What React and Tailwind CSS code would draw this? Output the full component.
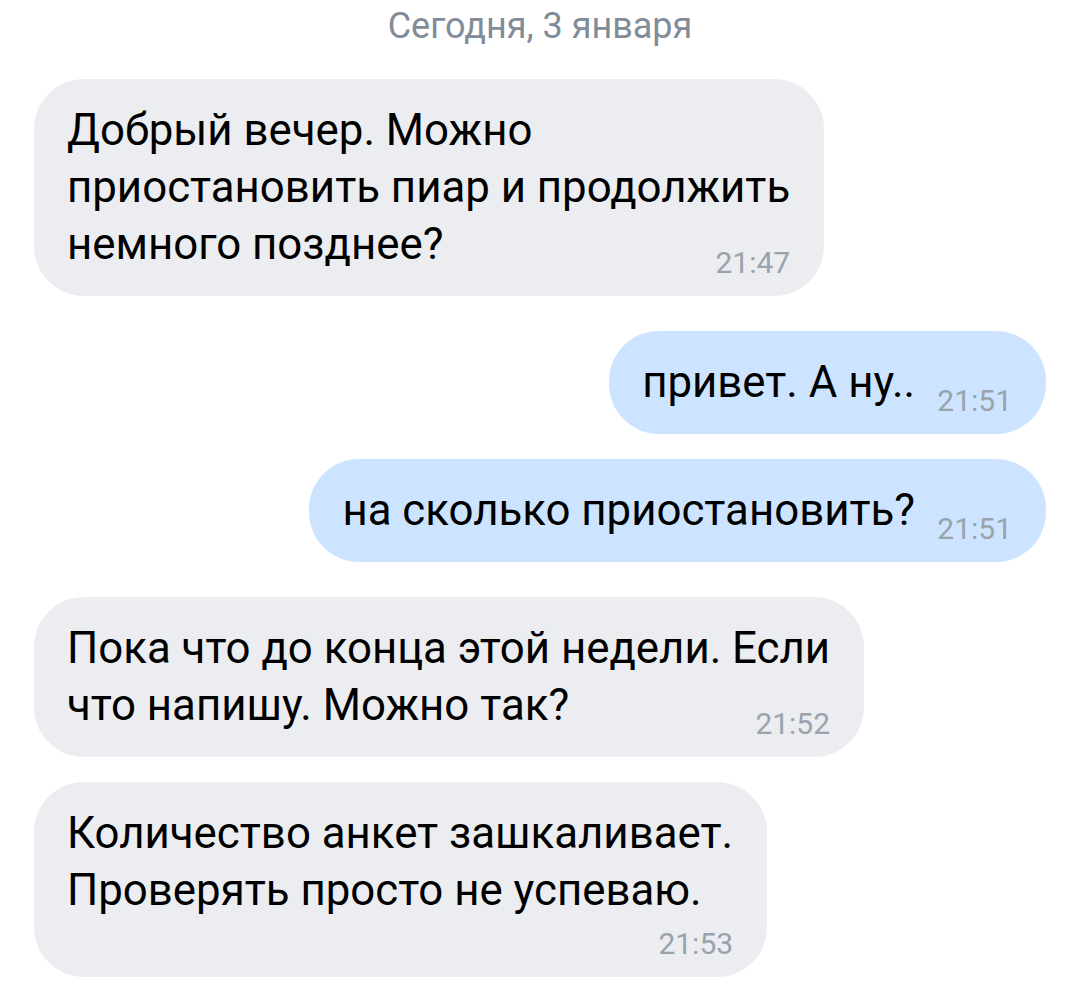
const messages = [
  {
    id: 1,
    out: false,
    lines: ['Добрый вечер. Можно', 'приостановить пиар и продолжить', 'немного позднее?'],
    time: '21:47',
  },
  { id: 2, out: true, lines: ['привет. А ну..'], time: '21:51' },
  { id: 3, out: true, lines: ['на сколько приостановить?'], time: '21:51' },
  {
    id: 4,
    out: false,
    lines: ['Пока что до конца этой недели. Если', 'что напишу. Можно так?'],
    time: '21:52',
  },
  {
    id: 5,
    out: false,
    lines: ['Количество анкет зашкаливает.', 'Проверять просто не успеваю.'],
    time: '21:53',
    timeBelow: true,
  },
];

function Bubble({ msg }) {
  const last = msg.lines.length - 1;
  return (
    <div
      className={`relative rounded-[50px] pt-[23px] pl-[33px] pr-[34px] text-[43.8px] leading-[57px] text-black ${
        msg.out ? 'bg-[#cce4ff]' : 'bg-[#ebedf0]'
      } ${msg.timeBelow ? 'pb-[18px]' : 'pb-[23px]'}`}
    >
      {msg.lines.map((line, i) => (
        <div key={i} className="whitespace-nowrap">
          {line}
          {i === last && !msg.timeBelow && <span className="inline-block w-[97px]" />}
        </div>
      ))}
      {msg.timeBelow ? (
        <div className="flex h-[40px] items-end justify-end text-[30px] leading-[30px] text-[#99a2ad]">
          {msg.time}
        </div>
      ) : (
        <span className="absolute bottom-[18px] right-[34px] text-[30px] leading-[30px] text-[#99a2ad]">
          {msg.time}
        </span>
      )}
    </div>
  );
}

export default function App() {
  return (
    <div className="min-h-screen bg-white font-['Roboto',sans-serif]">
      <div className="pt-[8px] text-center text-[36px] leading-[36px] text-[#818c99]">
        Сегодня, 3 января
      </div>
      <div className="flex flex-col px-[34px] pt-[35px] pb-[9px]">
        {messages.map((msg, i) => {
          const prev = messages[i - 1];
          const gap = !prev ? '' : prev.out === msg.out ? 'mt-[25px]' : 'mt-[35px]';
          return (
            <div key={msg.id} className={`flex ${msg.out ? 'justify-end' : 'justify-start'} ${gap}`}>
              <Bubble msg={msg} />
            </div>
          );
        })}
      </div>
    </div>
  );
}
